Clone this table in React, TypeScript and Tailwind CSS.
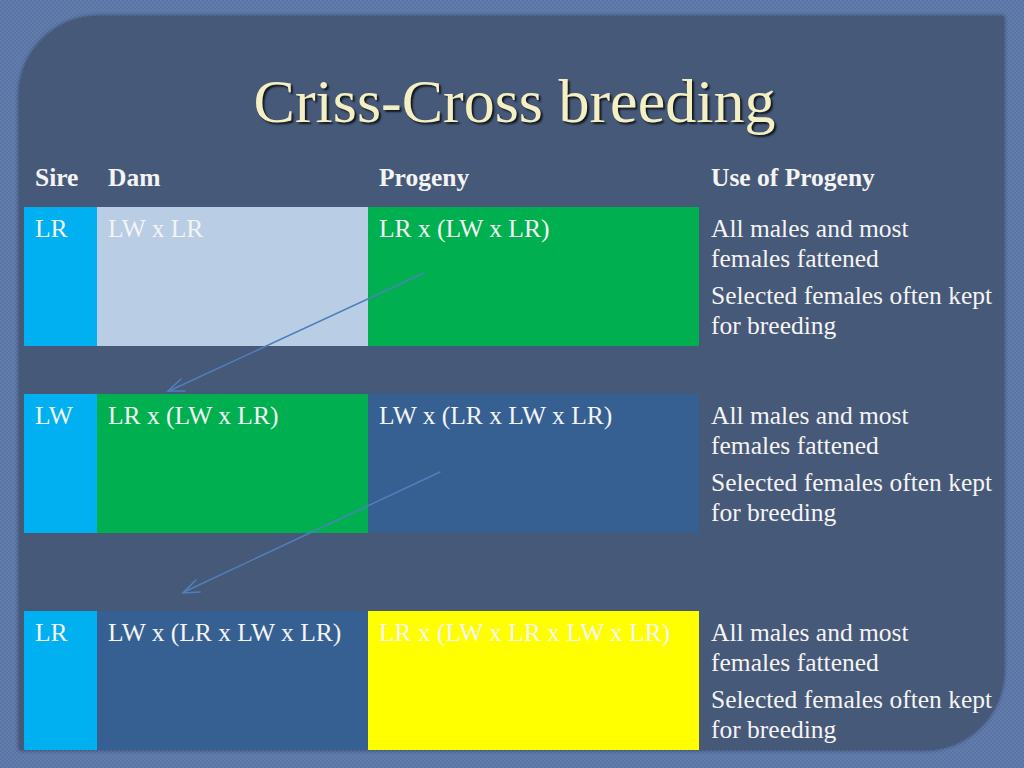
import React from "react";

type Row = {
  sire: string;
  dam: string;
  progeny: string;
  damBg: string;
  progenyBg: string;
};

const rows: Row[] = [
  { sire: "LR", dam: "LW x LR", progeny: "LR x (LW x LR)", damBg: "bg-[#b9cde5]", progenyBg: "bg-[#00b050]" },
  { sire: "LW", dam: "LR x (LW x LR)", progeny: "LW x (LR x LW x LR)", damBg: "bg-[#00b050]", progenyBg: "bg-[#366092]" },
  { sire: "LR", dam: "LW x (LR x LW x LR)", progeny: "LR x (LW x LR x LW x LR)", damBg: "bg-[#366092]", progenyBg: "bg-[#ffff00]" },
];

// spacer height after each row
const gaps = ["h-[48px]", "h-[78px]", "h-0"];

function UseCell() {
  return (
    <div className="px-[12px] pt-[7px] leading-[30px] whitespace-nowrap">
      <p>
        All males and most
        <br />
        females fattened
      </p>
      <p className="mt-[7px]">
        Selected females often kept
        <br />
        for breeding
      </p>
    </div>
  );
}

export default function App() {
  return (
    <div
      className="w-[1024px] h-[768px] pt-[16px] pl-[19px] bg-[repeating-conic-gradient(#5a74a5_0_25%,#637dad_0_50%)] bg-size-[4px_4px] overflow-hidden"
      style={{ fontFamily: '"Liberation Serif", "Times New Roman", serif' }}
    >
      <div className="relative w-[985px] h-[734px] bg-[#475978] rounded-tl-[80px] rounded-br-[80px] shadow-[0_0_4px_rgba(20,30,50,0.6)] overflow-hidden">
        <h1 className="pt-[48px] pl-[6px] h-[141px] text-center text-[62px] leading-[74px] text-[#f4f0c4] [text-shadow:2px_2px_2px_rgba(0,0,0,0.75)]">
          Criss-Cross breeding
        </h1>
        <div className="ml-[5px] text-[25.5px] text-[#f4f4f4]">
          <div className="grid grid-cols-[73px_271px_331px_1fr] h-[50px] font-bold leading-[30px]">
            <div className="px-[11px] pt-[6px]">Sire</div>
            <div className="px-[11px] pt-[6px]">Dam</div>
            <div className="px-[11px] pt-[6px]">Progeny</div>
            <div className="px-[12px] pt-[6px]">Use of Progeny</div>
          </div>
          {rows.map((r, idx) => (
            <div key={idx}>
              <div className="grid grid-cols-[73px_271px_331px_1fr] h-[139px]">
                <div className="bg-[#00b0f0] px-[11px] pt-[7px] leading-[30px]">{r.sire}</div>
                <div className={`${r.damBg} px-[11px] pt-[7px] leading-[30px]`}>{r.dam}</div>
                <div className={`${r.progenyBg} px-[11px] pt-[7px] leading-[30px]`}>{r.progeny}</div>
                <UseCell />
              </div>
              <div className={gaps[idx]} />
            </div>
          ))}
        </div>
        <svg className="absolute left-0 top-0 pointer-events-none" width="985" height="734" viewBox="19 16 985 734">
          <g stroke="#4f7fbd" strokeWidth="1.5" fill="none" strokeLinecap="round">
            <line x1="424" y1="273" x2="169" y2="391" />
            <polyline points="181,379 168,391 185,391" />
            <line x1="440" y1="472" x2="184" y2="592" />
            <polyline points="196,580 183,593 200,592" />
          </g>
        </svg>
      </div>
    </div>
  );
}
